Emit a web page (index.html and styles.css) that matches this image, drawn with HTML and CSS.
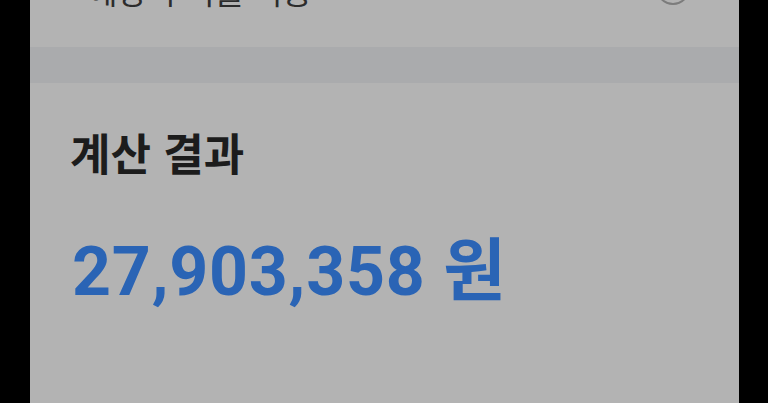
FILE: index.html
```html
<!DOCTYPE html>
<html lang="ko">
<head>
<meta charset="utf-8">
<link rel="stylesheet" href="styles.css">
</head>
<body>
<div class="screen">
  <div class="top">
    <div class="top-row">
      <span class="top-label">예상 수익률 적용</span>
      <span class="radio"></span>
    </div>
  </div>
  <div class="band"></div>
  <section class="result">
    <h2 class="result-title">계산 결과</h2>
    <p class="result-value">27,903,358 원</p>
  </section>
</div>
</body>
</html>
```
FILE: styles.css
```css
html, body {
  margin: 0;
  padding: 0;
  background: #000;
  height: 100%;
  overflow: hidden;
}
.screen {
  margin: 0 29px 0 30px;
  height: 403px;
  background: #b3b3b3;
  font-family: "Noto Sans CJK KR", sans-serif;
}
.top {
  height: 47px;
  overflow: hidden;
}
.top-row {
  display: flex;
  align-items: center;
  justify-content: space-between;
  height: 50px;
  margin-top: -35px;
  padding: 0 49px 0 58px;
}
.top-label {
  font-size: 32px;
  line-height: 1;
  color: #2c2c2c;
}
.radio {
  width: 30px;
  height: 30px;
  border: 2px solid #7c7c7c;
  border-radius: 50%;
  margin-top: -4px;
}
.band {
  height: 36px;
  background: #aaabad;
}
.result {
  padding: 47px 0 0 40px;
}
.result-title {
  margin: 0;
  font-size: 44px;
  line-height: 1;
  font-weight: 700;
  color: #1c1c1c;
}
.result-value {
  margin: 64px 0 0 2px;
  font-family: Roboto, "Noto Sans CJK KR", sans-serif;
  font-size: 68px;
  line-height: 1;
  font-weight: 700;
  letter-spacing: 0.8px;
  color: #2a64b5;
}
```
